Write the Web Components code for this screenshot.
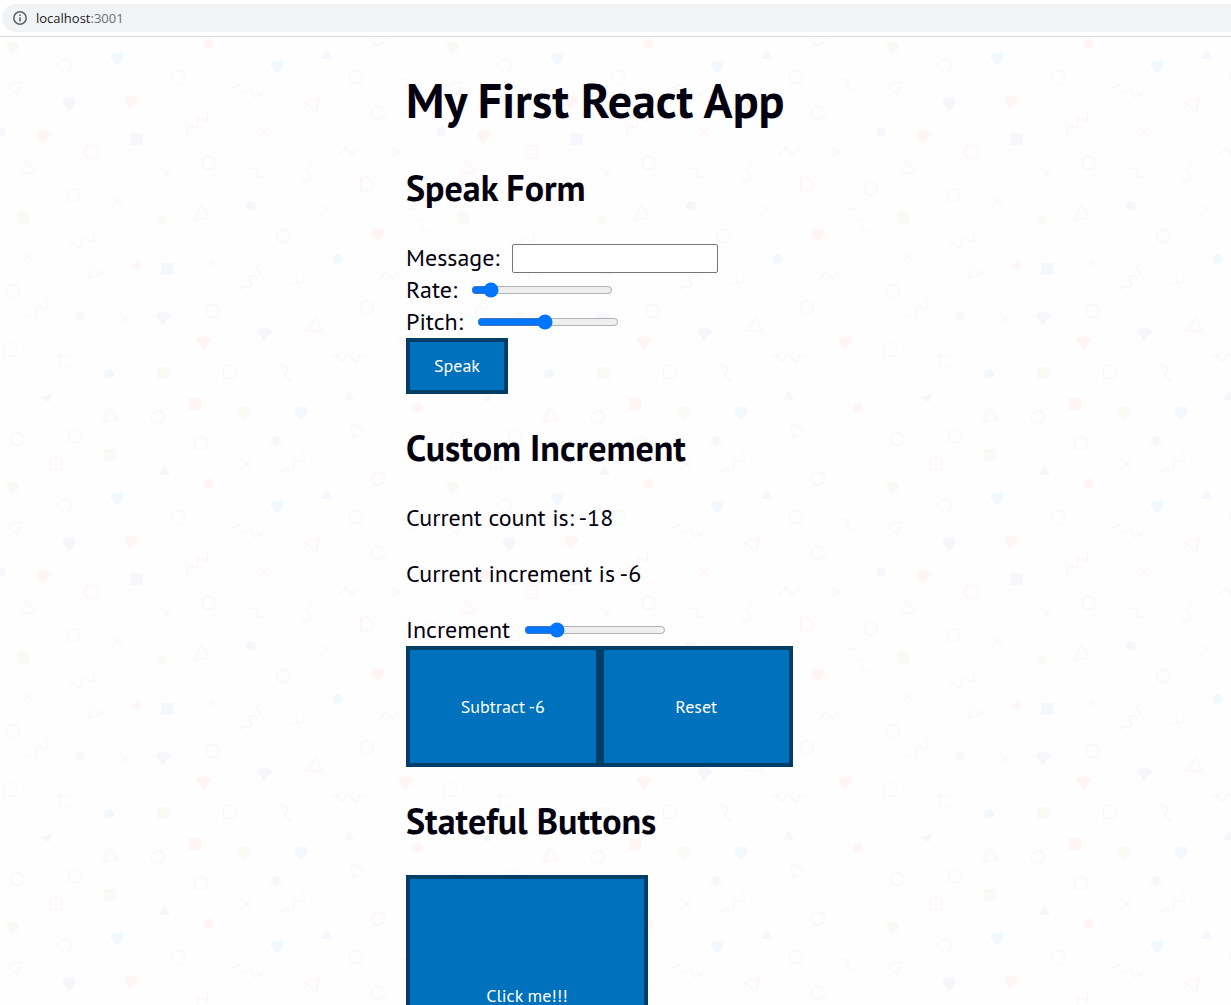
<!DOCTYPE html>
<html lang="en">
<head>
<meta charset="utf-8">
<title>My First React App</title>
<style>
  body { margin: 0; }
  demo-page { --ui: "PT Sans", "Noto Sans", sans-serif; --fill: #0071bc; --edge: #003e68; font: 24px/32px var(--ui); color: #03000f; }
</style>
</head>
<body>
<demo-page></demo-page>
<script>
const define = (name, html, setup) => {
  const template = document.createElement('template');
  template.innerHTML = html;
  customElements.define(name, class extends HTMLElement {
    constructor() {
      super();
      this.attachShadow({ mode: 'open' }).append(template.content.cloneNode(true));
    }
    connectedCallback() { if (setup) setup(this, this.shadowRoot); }
  });
};

define('address-bar', `
  <style>
    :host { display: block; flex: none; padding: 4px 0 4px 2px; background: #fff; border-bottom: 1px solid #dadce0; }
    .pill { display: flex; align-items: center; gap: 9px; height: 28px; padding-left: 11px; border-radius: 14px 0 0 14px; background: #f1f3f4; font: 13px/20px "Segoe UI", "Open Sans", sans-serif; color: #202124; }
    svg { width: 14px; height: 14px; }
    .port { color: #6b7075; }
  </style>
  <div class="pill">
    <svg viewBox="0 0 14 14" aria-hidden="true"><circle cx="7" cy="7" r="6.2" fill="none" stroke="#5f6368" stroke-width="1.5"/><path d="M6.2 6.2h1.6v4.2H6.2zM6.2 3.5h1.6v1.6H6.2z" fill="#5f6368"/></svg>
    <span class="url">localhost<span class="port">:3001</span></span>
  </div>`);

const GREY = '#f8f9f9', RED = '#fff5f4', BLUE = '#f3f8fc', PURPLE = '#f7f7fb', GREEN = '#f8fbf5', TEAL = '#f5faf9', SAND = '#fafaf5';
const shapes = [
  ['gem', 12.7, 48, GREEN], ['gem', 117, 59, BLUE], ['ring', 64.5, 66, GREY], ['ring', 178.5, 77.5, SAND],
  ['line', 'M8 85L22 81.5L17.5 95Z', GREY], ['gem', 69, 104, PURPLE], ['gem', 130.5, 102, RED],
  ['dot', 1.5, 132, PURPLE], ['dot', 441.5, 132, PURPLE], ['gem', 43, 137, RED], ['box', 136.5, 139.5, PURPLE],
  ['line', 'M187 135L188 126L197 128L198.5 118L207 121L208 111', RED], ['ring', 91.5, 152, RED],
  ['line', 'M26 160L36 172L21 174.5Z', RED], ['cross', 166.5, 173, SAND], ['cross', 117, 201, RED],
  ['frame', 73.5, 195, SAND], ['box', 23.5, 217.5, GREEN], ['dot', 162.5, 220, GREEN],
  ['line', 'M201 205L209.5 217L195 220Z', GREY], ['dot', 208.5, 43.5, RED], ['gem', 277, 67, BLUE],
  ['solid', 'M327 50L333 59H321Z', BLUE], ['ring', 378, 38.5, RED], ['ring', 378, 478.5, RED], ['ring', 356, 77, GREY],
  ['line', 'M231 89L239 84L243 93L251 89L255 98L263 93', TEAL], ['line', 'M305 102L319 98.5L316 112Z', RED],
  ['ring', 378, 113, SAND], ['cross', 264, 132, RED], ['ring', 208.5, 163, TEAL],
  ['line', 'M247 169L257 168.5V178L266 176.5', SAND], ['line', 'M307 157L313 165L305 170L311 178L302 183L308 190', SAND],
  ['line', 'M339 155L346 147.5L352 155L359 148', RED], ['cross', 397.5, 152, GREY], ['house', 367, 184, RED],
  ['dot', 251, 206, PURPLE], ['cross', 327, 209, GREY],
  ['wave', 84.5, 241, TEAL, -27], ['cross', 28, 257, SAND],
  ['line', 'M90 265L102 273L88 279Z', GREY], ['solid', 'M130 265L141 261L138 271Z', RED], ['box', 167, 269, BLUE],
  ['ring', 12.7, 291.5, SAND], ['wave', 39, 310, GREY, -40], ['dot', 80, 316, GREEN],
  ['cross', 125, 318.5, TEAL], ['gem', 162.5, 318.5, PURPLE], ['house', 10.5, 350, SAND], ['frame', 65, 361, GREY],
  ['dot', 109, 374, BLUE], ['box', 163.5, 373, GREEN], ['solid', 'M41 398L52 393L49 403Z', PURPLE],
  ['box', 195, 404, RED], ['line', 'M109 408L118 419L103 422Z', RED], ['ring', 157.5, 417.5, TEAL],
  ['ring', 283.5, 236, RED], ['gem', 378, 235, RED], ['plus', 213, 263, SAND], ['dot', 337.5, 259, BLUE],
  ['wave', 252.5, 279, TEAL, -54], ['line', 'M379 279L386 272L392 279L399 272', TEAL],
  ['plus', 298, 283, SAND], ['ring', 213, 311, TEAL], ['ring', 367, 307.5, GREY], ['gem', 264.5, 334, PURPLE],
  ['gem', 203.5, 343, RED], ['line', 'M316 318L322 332L307 330Z', RED], ['house', 229.5, 372, TEAL],
  ['line', 'M281 364L289 368L284 376L292 381', TEAL], ['wave', 348.5, 358, TEAL, 0],
  ['solid', 'M349 390L354 400H343Z', PURPLE], ['gem', 244, 413, GREEN], ['gem', 301, 413, BLUE],
  ['ring', 17.5, 439, TEAL], ['house', 75, 436, GREY], ['frame', 56, 463.5, RED], ['box', 110, 455, GREEN],
  ['solid', 'M165 465L170 475H159Z', PURPLE], ['house', 201, 443, GREY], ['line', 'M351 424L364 430L353 438Z', SAND],
  ['dot', 276, 441, PURPLE], ['cross', 246.5, 464, GREY], ['wave', 296, 463, GREY, -40],
  ['line', 'M399.5 79.5L408 80V89L415.5 90', TEAL], ['ring', 430.6, 188.5, GREY],
  ['line', 'M405.5 208.5L414.7 209L412.5 219L423 220L421 230L429 231', SAND],
  ['gem', 405, 343, RED], ['dot', 418, 408, RED]
];
const draw = {
  gem: (x, y, c) => `<path d="M${x - 7} ${y - 2}l3-4 4 0 4-1 4 5-8 9z" fill="${c}"/>`,
  dot: (x, y, c) => `<circle cx="${x}" cy="${y}" r="5" fill="${c}"/>`,
  ring: (x, y, c) => `<circle cx="${x}" cy="${y}" r="6.6" fill="none" stroke="${c}" stroke-width="1.6"/>`,
  box: (x, y, c) => `<path d="M${x - 6} ${y - 6}h12v12h-12z" fill="${c}"/>`,
  frame: (x, y, c) => `<path d="M${x - 5.5} ${y - 5.5}h11v11h-11z" fill="none" stroke="${c}" stroke-width="1.4"/>`,
  cross: (x, y, c) => `<path d="M${x - 5} ${y - 5}l10 10m0-10l-10 10" stroke="${c}" stroke-width="1.5"/>`,
  plus: (x, y, c) => `<path d="M${x - 7} ${y + 2}l14-4m-9-5l4 13" stroke="${c}" stroke-width="1.5"/>`,
  house: (x, y, c) => `<path d="M${x - 6} ${y - 6}l6-1 6 5.5v6l-1.500 1.500-10.500.5z" fill="none" stroke="${c}" stroke-width="1.5" stroke-linejoin="round"/>`,
  wave: (x, y, c, turn) => `<path transform="translate(${x} ${y}) rotate(${turn})" d="M-16.500-1C-14-5-11-4-10 0S-5 5-3.500 0 2-5 3.500 0 9 5 10 0 14-5 16.500-1" fill="none" stroke="${c}" stroke-width="1.5"/>`,
  line: (d, c) => `<path d="${d}" fill="none" stroke="${c}" stroke-width="1.5"/>`,
  solid: (d, c) => `<path d="${d}" fill="${c}"/>`
};

define('confetti-sheet', `
  <style>
    :host { display: grid; background: #fefefe; }
    svg, .content { grid-area: 1 / 1; min-width: 0; }
    svg { width: 100%; height: 100%; }
  </style>
  <svg aria-hidden="true">
    <defs><pattern id="confetti" width="440" height="440" patternUnits="userSpaceOnUse">
      <g transform="translate(0 -37)">${shapes.map(([kind, ...rest]) => draw[kind](...rest)).join('')}</g>
    </pattern></defs>
    <rect width="100%" height="100%" fill="url(#confetti)"/>
  </svg>
  <div class="content"><slot></slot></div>`);

define('action-button', `
  <style>
    :host { display: inline-block; vertical-align: top; }
    button { box-sizing: border-box; width: 100%; min-height: 56px; padding: 0 24px; border: 4px solid var(--edge); border-radius: 0; background: var(--fill); color: #fff; font: 18px/24px var(--ui); }
    :host([size="medium"]) { flex: 1; }
    :host([size="medium"]) button { min-height: 121px; }
    :host([size="large"]) { width: 242px; }
    :host([size="large"]) button { min-height: 242px; }
  </style>
  <button type="button"><slot></slot></button>`);

define('range-field', `
  <style>
    :host { display: flex; align-items: center; height: 32px; gap: 14px; }
    input { width: 142px; height: 16px; margin: 0; }
  </style>
  <label for="range"><slot></slot></label>
  <input id="range" type="range">`, (host, root) => {
    const input = root.querySelector('input');
    for (const name of ['min', 'max', 'step', 'value']) input.setAttribute(name, host.getAttribute(name));
    input.setAttribute('aria-label', host.textContent);
  });

define('message-field', `
  <style>
    :host { display: flex; align-items: center; height: 32px; gap: 12px; }
    input { box-sizing: border-box; width: 206px; height: 29px; padding: 1px 2px; border: 1px solid #767676; border-radius: 2px; background: #fff; font: 20px/24px var(--ui); }
  </style>
  <label for="message"><slot></slot></label>
  <input id="message" type="text">`);

define('page-section', `
  <style>
    :host { display: block; }
    h2 { margin: 30px 0; font-size: 36px; line-height: 48px; font-weight: 700; }
  </style>
  <h2><slot name="title"></slot></h2>
  <slot></slot>`);

define('demo-page', `
  <style>
    :host { display: flex; flex-direction: column; height: 100vh; }
    confetti-sheet { flex: 1; min-height: 0; overflow-y: auto; scrollbar-width: none; }
    main { max-width: 419px; margin: 0 auto; }
    h1 { margin: 0 0 32px; padding-top: 31px; font-size: 48px; line-height: 64px; font-weight: 700; }
    p { margin: 0 0 24px; }
    .pair { display: flex; max-width: 387px; }
  </style>
  <address-bar></address-bar>
  <confetti-sheet>
    <main>
      <h1>My First React App</h1>
      <page-section>
        <span slot="title">Speak Form</span>
        <message-field>Message:</message-field>
        <range-field min="0.1" max="10" step="0.1" value="1">Rate:</range-field>
        <range-field min="0.1" max="2" step="0.1" value="1">Pitch:</range-field>
        <action-button>Speak</action-button>
      </page-section>
      <page-section>
        <span slot="title">Custom Increment</span>
        <p>Current count is: -18</p>
        <p>Current increment is -6</p>
        <range-field min="-10" max="10" step="1" value="-6">Increment</range-field>
        <div class="pair">
          <action-button size="medium">Subtract -6</action-button>
          <action-button size="medium">Reset</action-button>
        </div>
      </page-section>
      <page-section>
        <span slot="title">Stateful Buttons</span>
        <action-button size="large">Click me!!!</action-button>
      </page-section>
    </main>
  </confetti-sheet>`);
</script>
</body>
</html>
